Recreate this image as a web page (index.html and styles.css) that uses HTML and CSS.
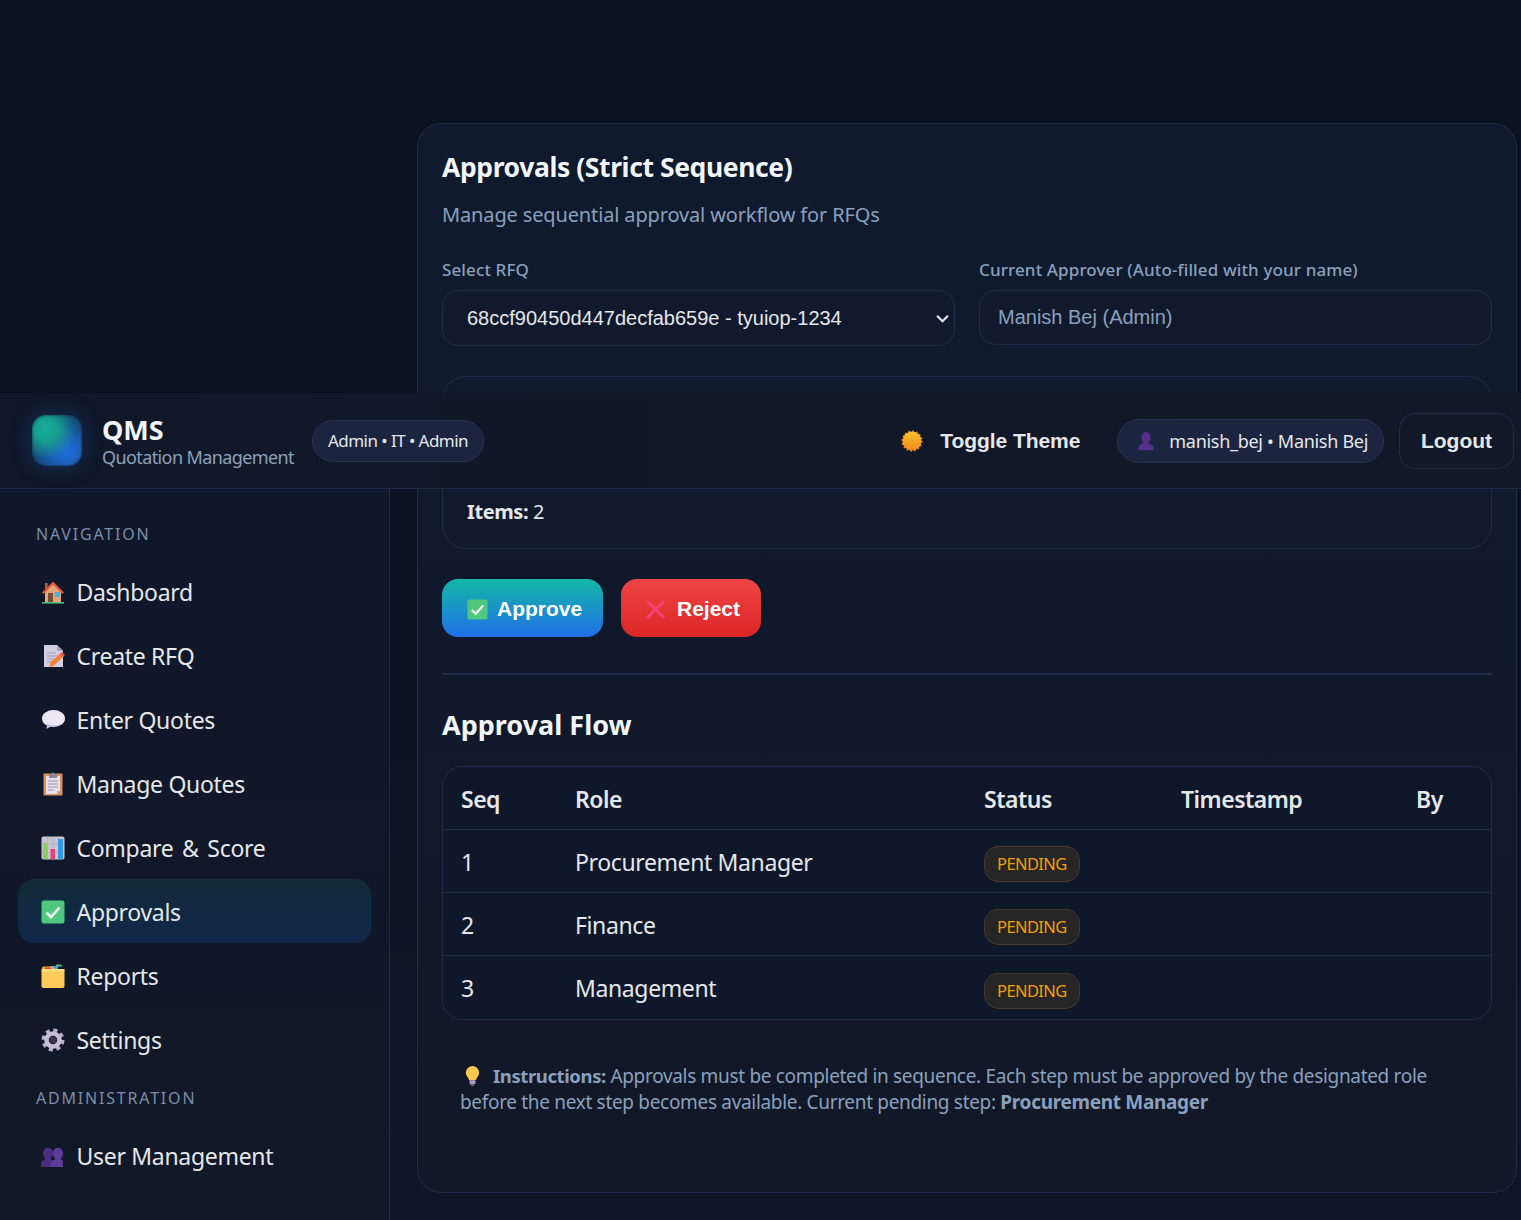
FILE: index.html
```html
<!DOCTYPE html>
<html lang="en">
<head>
<meta charset="utf-8">
<title>QMS - Approvals</title>
<link rel="stylesheet" href="styles.css">
</head>
<body>
<svg class="defs" width="0" height="0" aria-hidden="true">
  <defs>
    <linearGradient id="sunG" x1="0" y1="0" x2="0" y2="1"><stop offset="0" stop-color="#fcc02e"/><stop offset="1" stop-color="#f58a1f"/></linearGradient>
    <symbol id="i-home" viewBox="0 0 24 24">
      <rect x="4" y="3" width="2.6" height="6" fill="#a5644a"/>
      <path d="M4 11.5 12 4l8 7.5V22H4z" fill="#e0a878"/>
      <path d="M1 12.5 12 1.5l11 11-1.6 1.4L12 4.6 2.6 13.9z" fill="#e8533a"/>
      <rect x="7" y="13" width="5" height="9" fill="#7a4a3c"/>
      <rect x="14" y="12" width="5" height="5" fill="#3fb0ec"/>
      <rect x="1" y="22" width="22" height="1.6" fill="#52c07a"/>
    </symbol>
    <symbol id="i-doc" viewBox="0 0 24 24">
      <path d="M3 1h13l6 6v16H3z" fill="#d3cde0"/>
      <path d="M16 1l6 6h-6z" fill="#aaa3bc"/>
      <path d="M6 9h9M6 12h11M6 15h7M6 18h5" stroke="#a69fb4" stroke-width="1.2"/>
      <path d="M8.5 23l1-4.5L20 9l3 3-10 9.5z" fill="#f5822a"/>
      <path d="M19 10l2-2 3 3-2 2z" fill="#e8533a"/>
    </symbol>
    <symbol id="i-bubble" viewBox="0 0 24 24">
      <ellipse cx="12.5" cy="10.5" rx="11.5" ry="8.5" fill="#ece6f5"/>
      <path d="M6 15.5l-.5 5.5 6-3.5z" fill="#cfc6e2"/>
      <path d="M4 15c3 3 13 3.500 17-.5-3 4.500-14 5-17 .5z" fill="#c9bfdd"/>
    </symbol>
    <symbol id="i-clip" viewBox="0 0 24 24">
      <rect x="2.500" y="1.500" width="19" height="22" rx="1" fill="#d8935c"/>
      <path d="M5 4h14v15l-3 3H5z" fill="#e6e0ee"/>
      <path d="M16 22l3-3h-3z" fill="#b9b2c6"/>
      <path d="M7 9h10M7 12h10M7 15h10M7 18h6" stroke="#9a93a8" stroke-width="1.100"/>
      <path d="M8 2h2.500a1.500 1.500 0 0 1 3 0H16v4H8z" fill="#8a8598"/>
    </symbol>
    <symbol id="i-chart" viewBox="0 0 24 24">
      <rect x=".5" y=".5" width="23" height="23" rx="2" fill="#c9c5d0"/>
      <path d="M6.500.5v23M12 .5v23M17.500.5v23M.5 8h23M.5 16h23" stroke="#a8a4b0" stroke-width=".6"/>
      <rect x="2" y="7" width="4.500" height="16" fill="#86d05e"/>
      <rect x="9.500" y="13" width="4.500" height="10" fill="#ec3f7a"/>
      <rect x="17" y="3" width="5" height="20" fill="#2f9ae8"/>
    </symbol>
    <symbol id="i-check" viewBox="0 0 24 24">
      <rect x=".5" y=".5" width="23" height="23" rx="2.500" fill="#4fc77f"/>
      <path d="M5.500 12.500l4.500 4.500 8.500-9.500" fill="none" stroke="#f2f8f2" stroke-width="2.600"/>
    </symbol>
    <symbol id="i-folder" viewBox="0 0 24 24">
      <path d="M15 .5h5l1.500 2H15z" fill="#4cc27a"/>
      <path d="M9 2h8v3H9z" fill="#3f9fe0"/>
      <path d="M1 4q0-1.500 1.500-1.500H12l2 2.500H1z" fill="#f2a93a"/>
      <rect x="4" y="3.500" width="6" height="1.600" fill="#e8433a"/>
      <path d="M.5 7h23v15a2 2 0 0 1-2 2h-19a2 2 0 0 1-2-2z" fill="#ffca58"/>
      <path d="M.5 5h23v2.500H.5z" fill="#ffdf80"/>
    </symbol>
    <symbol id="i-gear" viewBox="0 0 24 24">
      <circle cx="12" cy="12" r="9.500" fill="none" stroke="#b9aecb" stroke-width="4" stroke-dasharray="4 3.460"/>
      <circle cx="12" cy="12" r="6.500" fill="none" stroke="#c6bcd6" stroke-width="4.600"/>
      <circle cx="12" cy="12" r="3.400" fill="#3c3546"/>
    </symbol>
    <symbol id="i-users" viewBox="0 0 24 24">
      <path d="M0 23v-3c0-3 3-4 4.500-5-2-2-2.500-4-2.500-6 0-3 2-5 5-5s5 2 5 5c0 2-.5 4-2.500 6 1.500 1 4.500 2 4.500 5v3z" fill="#4d2d82"/>
      <path d="M10 23v-3c0-3 3-4 4.500-5-2-2-2.500-4-2.500-6 0-3 2-5 5-5s5 2 5 5c0 2-.5 4-2.500 6 1 .7 2.500 1.300 2.500 2.500V23z" fill="#5e3a99"/>
    </symbol>
    <symbol id="i-bust" viewBox="0 0 24 24">
      <path d="M3 23v-2.500c0-3.500 4-4.500 6-6-2-2-2.500-4.500-2.500-7C6.500 4 8.500 1.500 12 1.500s5.500 2.500 5.500 6c0 2.500-.5 5-2.500 7 2 1.500 6 2.500 6 6V23z" fill="#54308c"/>
    </symbol>
    <symbol id="i-sun" viewBox="0 0 24 24">
      <circle cx="12" cy="12" r="10.800" fill="none" stroke="#f08a22" stroke-width="1.600" stroke-dasharray="1.800 2.440"/>
      <circle cx="12" cy="12" r="10.400" fill="url(#sunG)"/>
    </symbol>
    <symbol id="i-x" viewBox="0 0 24 24">
      <path d="M2.500 2.500l19 19M21.500 2.500l-19 19" fill="none" stroke="#f5417a" stroke-width="3.400"/>
    </symbol>
    <symbol id="i-bulb" viewBox="3 0 18 24">
      <path d="M12 0a8 8 0 0 0-8 8c0 3.500 3 5.500 4 9h8c1-3.500 4-5.500 4-9a8 8 0 0 0-8-8z" fill="#fcc94e"/>
      <rect x="8.500" y="17" width="7" height="5" rx="1" fill="#a79bc0"/>
      <rect x="10" y="22" width="4" height="2" fill="#6f6485"/>
    </symbol>
  </defs>
</svg>

<div class="page">
  <main class="main">
    <section class="card">
      <h2 class="card-title">Approvals (Strict Sequence)</h2>
      <p class="card-sub">Manage sequential approval workflow for RFQs</p>
      <div class="form-grid">
        <div class="field">
          <label class="label" for="rfq">Select RFQ</label>
          <div class="select-wrap">
            <select id="rfq" class="control select"><option>68ccf90450d447decfab659e - tyuiop-1234</option></select>
            <svg class="chevron" viewBox="0 0 12 8"><path d="M1 1.500l5 5 5-5" fill="none" stroke="#e5e7eb" stroke-width="2"/></svg>
          </div>
        </div>
        <div class="field">
          <label class="label" for="approver">Current Approver (Auto-filled with your name)</label>
          <input id="approver" class="control input" value="Manish Bej (Admin)" readonly>
        </div>
      </div>
      <div class="summary"><p class="summary-line"><strong>Items:</strong> 2</p></div>
      <div class="actions">
        <button class="btn btn-approve"><svg class="btn-ico"><use href="#i-check"/></svg>Approve</button>
        <button class="btn btn-reject"><svg class="btn-ico"><use href="#i-x"/></svg>Reject</button>
      </div>
      <hr class="rule">
      <h3 class="section-title">Approval Flow</h3>
      <div class="table-wrap">
        <table class="table">
          <thead><tr><th class="c-seq">Seq</th><th class="c-role">Role</th><th class="c-status">Status</th><th class="c-time">Timestamp</th><th>By</th></tr></thead>
          <tbody>
            <tr><td>1</td><td>Procurement Manager</td><td class="c-tag"><span class="tag">PENDING</span></td><td></td><td></td></tr>
            <tr><td>2</td><td>Finance</td><td class="c-tag"><span class="tag">PENDING</span></td><td></td><td></td></tr>
            <tr><td>3</td><td>Management</td><td class="c-tag"><span class="tag">PENDING</span></td><td></td><td></td></tr>
          </tbody>
        </table>
      </div>
      <p class="note"><svg class="note-ico"><use href="#i-bulb"/></svg><strong class="note-lead">Instructions:</strong> Approvals must be completed in sequence. Each step must be approved by the designated role before the next step becomes available. Current pending step: <strong>Procurement Manager</strong></p>
    </section>
  </main>

  <header class="topbar">
    <div class="logo"></div>
    <div class="brand">
      <div class="brand-name">QMS</div>
      <div class="brand-sub">Quotation Management</div>
    </div>
    <span class="pill pill-role">Admin • IT • Admin</span>
    <button class="theme"><svg class="theme-ico"><use href="#i-sun"/></svg>Toggle Theme</button>
    <span class="pill pill-user"><svg class="user-ico"><use href="#i-bust"/></svg>manish_bej • Manish Bej</span>
    <button class="logout">Logout</button>
  </header>

  <aside class="sidebar">
    <div class="nav-head">NAVIGATION</div>
    <a class="nav-item"><svg class="nav-ico"><use href="#i-home"/></svg>Dashboard</a>
    <a class="nav-item"><svg class="nav-ico"><use href="#i-doc"/></svg>Create RFQ</a>
    <a class="nav-item"><svg class="nav-ico"><use href="#i-bubble"/></svg>Enter Quotes</a>
    <a class="nav-item"><svg class="nav-ico"><use href="#i-clip"/></svg>Manage Quotes</a>
    <a class="nav-item nav-item-wide"><svg class="nav-ico"><use href="#i-chart"/></svg>Compare &amp; Score</a>
    <a class="nav-item active"><svg class="nav-ico"><use href="#i-check"/></svg>Approvals</a>
    <a class="nav-item"><svg class="nav-ico"><use href="#i-folder"/></svg>Reports</a>
    <a class="nav-item"><svg class="nav-ico"><use href="#i-gear"/></svg>Settings</a>
    <div class="nav-head nav-head-admin">ADMINISTRATION</div>
    <a class="nav-item"><svg class="nav-ico"><use href="#i-users"/></svg>User Management</a>
  </aside>
</div>
</body>
</html>
```
FILE: styles.css
```css
* { box-sizing: border-box; }
html, body { margin: 0; padding: 0; }
body {
  background: #0a1120;
  color: #e5e7eb;
  font-family: "Noto Sans", "Open Sans", sans-serif;
}
.defs { position: absolute; }
.page {
  position: relative;
  width: 1521px;
  height: 1220px;
  overflow: hidden;
  background: linear-gradient(180deg, #0a1120 0%, #0b1322 60%, #0e1628 100%);
}
.main { padding: 123px 4px 0 417px; }
.card {
  height: 1070px;
  padding: 24px;
  border: 1px solid #1e2d4a;
  border-radius: 24px;
  background: linear-gradient(180deg, #0f1a2e 0%, #111827 100%);
}
.card-title {
  margin: 0;
  font-size: 26.5px;
  line-height: 38px;
  font-weight: 700;
  letter-spacing: -.4px;
  color: #f1f5f9;
}
.card-sub {
  margin: 14px 0 0;
  font-size: 20px;
  line-height: 30px;
  letter-spacing: -.14px;
  color: #8ba0bd;
}
.form-grid {
  display: grid;
  grid-template-columns: 1fr 1fr;
  gap: 24px;
  margin-top: 28px;
  align-items: start;
}
.label {
  display: block;
  font-size: 17px;
  line-height: 24px;
  font-weight: 500;
  letter-spacing: .12px;
  color: #8ba0bd;
}
.select-wrap { position: relative; margin-top: 8px; }
.control {
  display: block;
  width: 100%;
  margin-top: 8px;
  border: 1px solid #1e2d4a;
  border-radius: 16px;
  background: #111a2d;
  font-family: "Liberation Sans", Arial, sans-serif;
  font-size: 20px;
  outline: none;
}
.select {
  height: 56px;
  margin-top: 0;
  padding: 0 24px;
  color: #e5e7eb;
  appearance: none;
  letter-spacing: 0;
}
.chevron { position: absolute; right: 6px; top: 24px; width: 13px; height: 9px; }
.input { height: 55px; padding: 0 18px; color: #8ba0bd; }
.summary {
  display: flex;
  align-items: flex-end;
  height: 173px;
  margin-top: 30px;
  padding: 0 24px 21px;
  border: 1px solid #1e2d4a;
  border-radius: 24px;
}
.summary-line { margin: 0; font-size: 20px; line-height: 30px; letter-spacing: -.4px; }
.actions { display: flex; gap: 18px; margin-top: 30px; }
.btn {
  display: flex;
  align-items: center;
  height: 58px;
  border: 0;
  border-radius: 16px;
  color: #fff;
  font-family: "Liberation Sans", Arial, sans-serif;
  font-size: 21px;
  font-weight: 700;
}
.btn-approve { width: 161px; padding: 2px 0 0 25px; background: linear-gradient(180deg, #14b8a6, #1f6fe8); }
.btn-reject { width: 140px; padding: 2px 0 0 24px; background: linear-gradient(180deg, #ef4444, #dc2626); }
.btn-ico { width: 21px; height: 21px; margin-right: 9px; flex: none; }
.btn-reject .btn-ico { margin-right: 11px; }
.rule { height: 2px; margin: 36px 0 0; border: 0; background: #1e2d4a; }
.section-title {
  margin: 30px 0 0;
  font-size: 27px;
  line-height: 40px;
  font-weight: 700;
  letter-spacing: 0;
  color: #f1f5f9;
}
.table-wrap {
  margin-top: 21px;
  border: 1px solid #1e2d4a;
  border-radius: 20px;
  overflow: hidden;
  background: #0f172a;
}
.table { width: 100%; border-collapse: collapse; table-layout: fixed; }
.table th, .table td {
  height: 63px;
  padding: 2px 18px 0;
  text-align: left;
  font-size: 23px;
  letter-spacing: -.38px;
  border-bottom: 1px solid #1e2d4a;
}
.table th { height: 62px; font-weight: 600; letter-spacing: -.5px; }
.table tr:last-child td { height: 64px; border-bottom: 0; }
.table .c-tag { padding-top: 6px; }
.c-seq { width: 114px; }
.c-role { width: 409px; }
.c-status { width: 197px; }
.c-time { width: 235px; }
.tag {
  display: inline-flex;
  align-items: center;
  height: 36px;
  padding: 0 12px;
  border: 1px solid #453a2b;
  border-radius: 14px;
  background: #262626;
  color: #f59e0b;
  font-size: 16.5px;
  letter-spacing: -.6px;
}
.note {
  margin: 43px 0 0;
  padding: 0 18px;
  font-size: 19px;
  line-height: 26px;
  letter-spacing: -.32px;
  color: #8ba0bd;
}
.note-lead { font-size: 18.5px; letter-spacing: -.4px; }
.note-ico { display: inline-block; width: 15px; height: 20px; margin: 0 13px 0 5px; vertical-align: -3px; }
.topbar {
  position: absolute;
  top: 393px;
  left: 0;
  right: 0;
  display: flex;
  align-items: center;
  height: 96px;
  padding: 0 7px 0 32px;
  border-bottom: 1px solid #1e2d4a;
  background: linear-gradient(90deg, #101829, #111827);
}
.logo {
  width: 50px;
  height: 51px;
  border-radius: 14px;
  background: radial-gradient(circle at 28% 28%, #16ad98 0%, #16a090 22%, transparent 58%), radial-gradient(circle at 70% 72%, #2070e0 0%, #1c62c0 22%, #14486e 70%);
  box-shadow: 0 0 22px rgba(30, 100, 220, .3), inset 0 0 3px rgba(17, 24, 39, .8);
}
.brand { margin-left: 20px; }
.brand-name { padding-top: 1px; font-size: 27px; line-height: 30px; font-weight: 700; letter-spacing: 0; color: #f1f5f9; }
.brand-sub { padding-top: 1px; font-size: 18px; line-height: 22px; letter-spacing: -.6px; color: #8ba0bd; }
.pill {
  display: inline-flex;
  align-items: center;
  border: 1px solid #25344f;
  border-radius: 22px;
  background: #1b2540;
  color: #e5e7eb;
  font-size: 18px;
  letter-spacing: -.3px;
}
.pill-role { height: 42px; margin-left: 18px; padding: 0 15px; font-size: 17px; letter-spacing: -.55px; }
.theme {
  display: flex;
  align-items: center;
  margin-left: auto;
  padding: 0;
  border: 0;
  background: transparent;
  color: #e5e7eb;
  font-family: "Liberation Sans", Arial, sans-serif;
  font-size: 21px;
  font-weight: 700;
  letter-spacing: -.05px;
}
.theme-ico { width: 22px; height: 22px; margin-right: 17px; }
.pill-user { height: 44px; margin-left: 37px; padding: 0 15px 0 18px; }
.user-ico { width: 20px; height: 20px; margin-right: 13px; }
.logout {
  width: 115px;
  height: 56px;
  margin-left: 15px;
  border: 1px solid #1e2d4a;
  border-radius: 16px;
  background: #111827;
  color: #e5e7eb;
  font-family: "Liberation Sans", Arial, sans-serif;
  font-size: 21px;
  font-weight: 700;
}
.sidebar {
  position: absolute;
  top: 489px;
  left: 0;
  bottom: 0;
  width: 390px;
  padding: 0 18px;
  border-right: 1px solid #1e2d4a;
  background: linear-gradient(180deg, #0f172a, #111827);
}
.nav-head {
  height: 24px;
  margin: 33px 0 13px 18px;
  font-size: 16px;
  line-height: 24px;
  letter-spacing: 1.8px;
  color: #7b8ea8;
}
.nav-head-admin { margin-top: 15px; margin-bottom: 13px; }
.nav-item {
  display: flex;
  align-items: center;
  height: 64px;
  padding: 2px 23px 0;
  border-radius: 16px;
  font-size: 23px;
  letter-spacing: -.3px;
  color: #e5e7eb;
}
.nav-item-wide { word-spacing: 3px; }
.nav-item.active { background: linear-gradient(180deg, #112b39, #11274a); }
.nav-ico { width: 24px; height: 24px; margin-right: 11.500px; flex: none; }
```
